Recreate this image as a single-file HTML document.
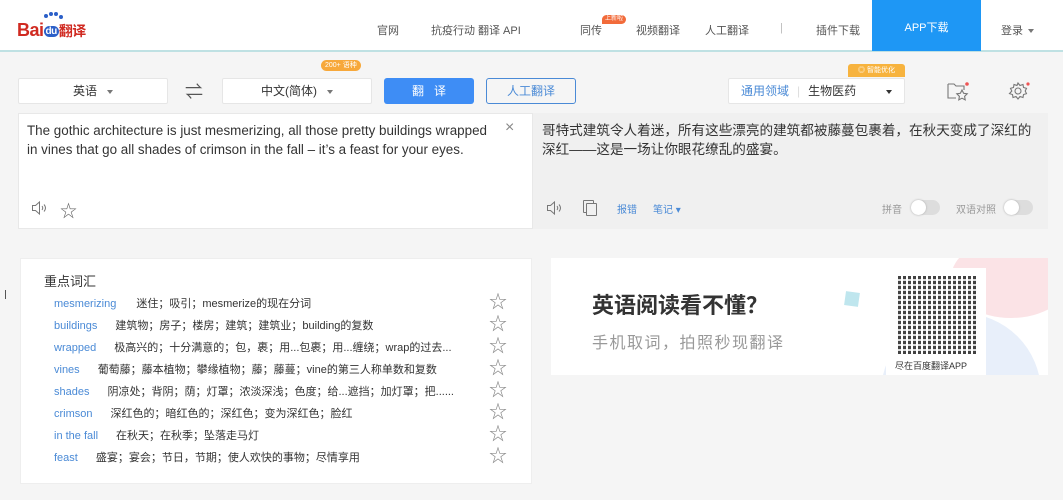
<!DOCTYPE html>
<html><head><meta charset="utf-8"><style>
*{margin:0;padding:0;box-sizing:border-box}
body{width:1063px;height:500px;background:#f5f5f5;font-family:"Liberation Sans","Noto Sans CJK SC",sans-serif;position:relative;overflow:hidden;color:#333}
.a{position:absolute}
.hdr{left:0;top:0;width:1063px;height:52px;background:#fff;border-bottom:2px solid #bfe1e3}
.nav{top:22px;font-size:11px;color:#555;white-space:nowrap}
.box{background:#fff;border:1px solid #e6e6e6;height:26px;font-size:12px;line-height:24px;text-align:center;border-radius:2px}
.tri{display:inline-block;width:0;height:0;border-left:3px solid transparent;border-right:3px solid transparent;border-top:4px solid #777;vertical-align:middle;margin-left:10px}
.vw{font-size:11.5px;color:#4a8ad6}
.row{left:54px;font-size:11px;height:14px;line-height:14px;white-space:nowrap}
.row span{color:#333;margin-left:18px}
.star{left:489px;color:#888;font-size:18px;line-height:14px}
</style></head><body>
<div class="a hdr"></div>
<div class="a" style="left:17px;top:20px;font-size:18px;font-weight:bold;color:#d02a21;letter-spacing:-0.5px">Bai<span style="display:inline-block;background:#2b5fc8;color:#fff;font-size:10px;border-radius:6px;padding:0 2px;vertical-align:2px">du</span><span style="font-size:14px">翻译</span></div>
<div class="a" style="left:44px;top:14px;width:4px;height:4px;border-radius:50%;background:#2b5fc8;box-shadow:5px -2px 0 #2b5fc8,10px -2px 0 #2b5fc8,15px 1px 0 #2b5fc8"></div>
<div class="a nav" style="left:377px">官网</div>
<div class="a nav" style="left:431px">抗疫行动</div>
<div class="a nav" style="left:478px">翻译 API</div>
<div class="a nav" style="left:580px">同传</div>
<div class="a" style="left:602px;top:15px;background:#f26b3a;color:#fff;font-size:6px;padding:0 3px;border-radius:6px 6px 6px 0;line-height:9px">上新啦</div>
<div class="a nav" style="left:636px">视频翻译</div>
<div class="a nav" style="left:705px">人工翻译</div>
<div class="a nav" style="left:780px;color:#bbb">|</div>
<div class="a nav" style="left:816px">插件下载</div>
<div class="a" style="left:872px;top:0;width:109px;height:51px;background:#1e97f5;color:#fff;font-size:11px;text-align:center;line-height:56px">APP下载</div>
<div class="a nav" style="left:1001px">登录 <span class="tri" style="margin-left:2px"></span></div>

<div class="a box" style="left:18px;top:78px;width:150px">英语<span class="tri"></span></div>
<div class="a" style="left:185px;top:78px;font-size:18px;color:#555">⇌</div>
<div class="a box" style="left:222px;top:78px;width:150px">中文(简体)<span class="tri"></span></div>
<div class="a" style="left:321px;top:60px;background:#f7a83a;color:#fff;font-size:7px;line-height:11px;padding:0 4px;border-radius:6px">200+ 语种</div>
<div class="a" style="left:384px;top:78px;width:90px;height:26px;background:#3e8df5;color:#fff;border-radius:3px;font-size:12px;text-align:center;line-height:26px">翻 &nbsp; 译</div>
<div class="a" style="left:486px;top:78px;width:90px;height:26px;border:1px solid #4a8ad6;color:#4a8ad6;border-radius:3px;font-size:12px;text-align:center;line-height:24px">人工翻译</div>
<div class="a box" style="left:728px;top:78px;width:177px;text-align:left;padding-left:12px"><span style="color:#4a8ad6">通用领域</span><span style="color:#ddd;margin:0 8px">|</span>生物医药<span class="tri" style="margin-left:30px;border-top-color:#333"></span></div>
<div class="a" style="left:848px;top:64px;width:57px;height:13px;background:#f7b33e;color:#fff;font-size:7px;line-height:13px;text-align:center;border-radius:3px 3px 0 0">◎ 智能优化</div>
<svg class="a" style="left:946px;top:80px" width="24" height="22" viewBox="0 0 24 22" fill="none" stroke="#777" stroke-width="1.1"><path d="M2 4h6l2 2h8v4M2 4v14h8"/><path d="M16 10l1.6 3.3 3.6.5-2.6 2.5.6 3.6-3.2-1.7-3.2 1.7.6-3.6-2.6-2.5 3.6-.5z"/><circle cx="21" cy="4" r="1.8" fill="#e55" stroke="none"/></svg>
<svg class="a" style="left:1008px;top:81px" width="24" height="22" viewBox="0 0 24 22" fill="none" stroke="#777" stroke-width="1.1"><circle cx="10" cy="10" r="3"/><path d="M10 2l2 2.5 3-1 .5 3 3 .9-1.3 2.6 1.3 2.6-3 .9-.5 3-3-1-2 2.5-2-2.5-3 1-.5-3-3-.9L3.8 10 2.5 7.4l3-.9.5-3 3 1z"/><circle cx="20" cy="3" r="1.6" fill="#e55" stroke="none"/></svg>

<div class="a" style="left:18px;top:113px;width:515px;height:116px;background:#fff;border:1px solid #e8e8e8"></div>
<div class="a" style="left:27px;top:121px;font-size:13.4px;line-height:19px;color:#333;white-space:nowrap">The gothic architecture is just mesmerizing, all those pretty buildings wrapped<br>in vines that go all shades of crimson in the fall – it’s a feast for your eyes.</div>
<div class="a" style="left:505px;top:119px;font-size:16px;color:#888">×</div>
<svg class="a" style="left:31px;top:200px" width="18" height="16" viewBox="0 0 18 16" fill="none" stroke="#777" stroke-width="1"><path d="M1.5 5.5h3l4-3.5v12l-4-3.5h-3z"/><path d="M11 6q1.5 2 0 4M13 4.5q3 3.5 0 7"/></svg>
<div class="a" style="left:60px;top:197px;font-size:17px;color:#666">☆</div>

<div class="a" style="left:533px;top:113px;width:515px;height:116px;background:#f0f0f0"></div>
<div class="a" style="left:542px;top:121px;font-size:13.6px;line-height:19px;color:#333;white-space:nowrap">哥特式建筑令人着迷，所有这些漂亮的建筑都被藤蔓包裹着，在秋天变成了深红的<br>深红——这是一场让你眼花缭乱的盛宴。</div>
<svg class="a" style="left:546px;top:200px" width="18" height="16" viewBox="0 0 18 16" fill="none" stroke="#777" stroke-width="1"><path d="M1.5 5.5h3l4-3.5v12l-4-3.5h-3z"/><path d="M11 6q1.5 2 0 4M13 4.5q3 3.5 0 7"/></svg>
<div class="a" style="left:583px;top:200px;width:11px;height:13px;border:1px solid #777;border-radius:1px;background:#f0f0f0"></div>
<div class="a" style="left:586px;top:203px;width:11px;height:13px;border:1px solid #777;border-radius:1px;background:#f0f0f0"></div>
<div class="a" style="left:617px;top:201px;font-size:10px;color:#4a8ad6">报错</div>
<div class="a" style="left:653px;top:201px;font-size:10px;color:#4a8ad6">笔记 ▾</div>
<div class="a" style="left:882px;top:201px;font-size:10px;color:#999">拼音</div>
<div class="a" style="left:911px;top:200px;width:29px;height:15px;border-radius:8px;background:#ddd"><div style="width:15px;height:15px;border-radius:50%;background:#fff;box-shadow:0 0 2px #aaa"></div></div>
<div class="a" style="left:956px;top:201px;font-size:10px;color:#999">双语对照</div>
<div class="a" style="left:1004px;top:200px;width:29px;height:15px;border-radius:8px;background:#ddd"><div style="width:15px;height:15px;border-radius:50%;background:#fff;box-shadow:0 0 2px #aaa"></div></div>

<div class="a" style="left:20px;top:258px;width:512px;height:226px;background:#fff;border:1px solid #eee"></div>
<div class="a" style="left:5px;top:290px;width:1px;height:9px;background:#555"></div>
<div class="a" style="left:44px;top:271px;font-size:13px;color:#333">重点词汇</div>
<div class="a row vw" style="top:297px">mesmerizing<span style="margin-left:20px">迷住；吸引；mesmerize的现在分词</span></div>
<div class="a row vw" style="top:319px">buildings<span>建筑物；房子；楼房；建筑；建筑业；building的复数</span></div>
<div class="a row vw" style="top:341px">wrapped<span>极高兴的；十分满意的；包，裹；用...包裹；用...缠绕；wrap的过去...</span></div>
<div class="a row vw" style="top:363px">vines<span>葡萄藤；藤本植物；攀缘植物；藤；藤蔓；vine的第三人称单数和复数</span></div>
<div class="a row vw" style="top:385px">shades<span>阴凉处；背阴；荫；灯罩；浓淡深浅；色度；给...遮挡；加灯罩；把......</span></div>
<div class="a row vw" style="top:407px">crimson<span>深红色的；暗红色的；深红色；变为深红色；脸红</span></div>
<div class="a row vw" style="top:429px">in the fall<span>在秋天；在秋季；坠落走马灯</span></div>
<div class="a row vw" style="top:451px">feast<span>盛宴；宴会；节日，节期；使人欢快的事物；尽情享用</span></div>
<div class="a star" style="top:295px">☆</div><div class="a star" style="top:317px">☆</div><div class="a star" style="top:339px">☆</div><div class="a star" style="top:361px">☆</div><div class="a star" style="top:383px">☆</div><div class="a star" style="top:405px">☆</div><div class="a star" style="top:427px">☆</div><div class="a star" style="top:449px">☆</div>

<div class="a" style="left:551px;top:258px;width:497px;height:117px;background:#fff;overflow:hidden">
 <div class="a" style="left:400px;top:-20px;width:120px;height:80px;border-radius:50%;background:#fbe3e6"></div>
 <div class="a" style="left:330px;top:55px;width:160px;height:160px;border-radius:50%;background:#e8effa"></div>
 <div class="a" style="left:335px;top:10px;width:100px;height:107px;background:#fff"></div>
 <div class="a" style="left:41px;top:30px;font-size:22px;font-weight:bold;color:#333">英语阅读看不懂？</div>
 <div class="a" style="left:41px;top:71px;font-size:16px;color:#999;letter-spacing:1.5px">手机取词，拍照秒现翻译</div>
 <div class="a" style="left:294px;top:34px;width:14px;height:14px;background:#bfe6ee;transform:rotate(8deg)"></div>
 <div class="a" style="left:347px;top:18px;width:79px;height:78px;background:repeating-linear-gradient(90deg,#222 0 3px,#fff 3px 5px),#222;opacity:.85"></div>
 <div class="a" style="left:347px;top:18px;width:79px;height:78px;background:repeating-linear-gradient(0deg,transparent 0 3px,rgba(255,255,255,.8) 3px 5px)"></div>
 <div class="a" style="left:344px;top:101px;font-size:9px;color:#333">尽在百度翻译APP</div>
</div>
</body></html>
